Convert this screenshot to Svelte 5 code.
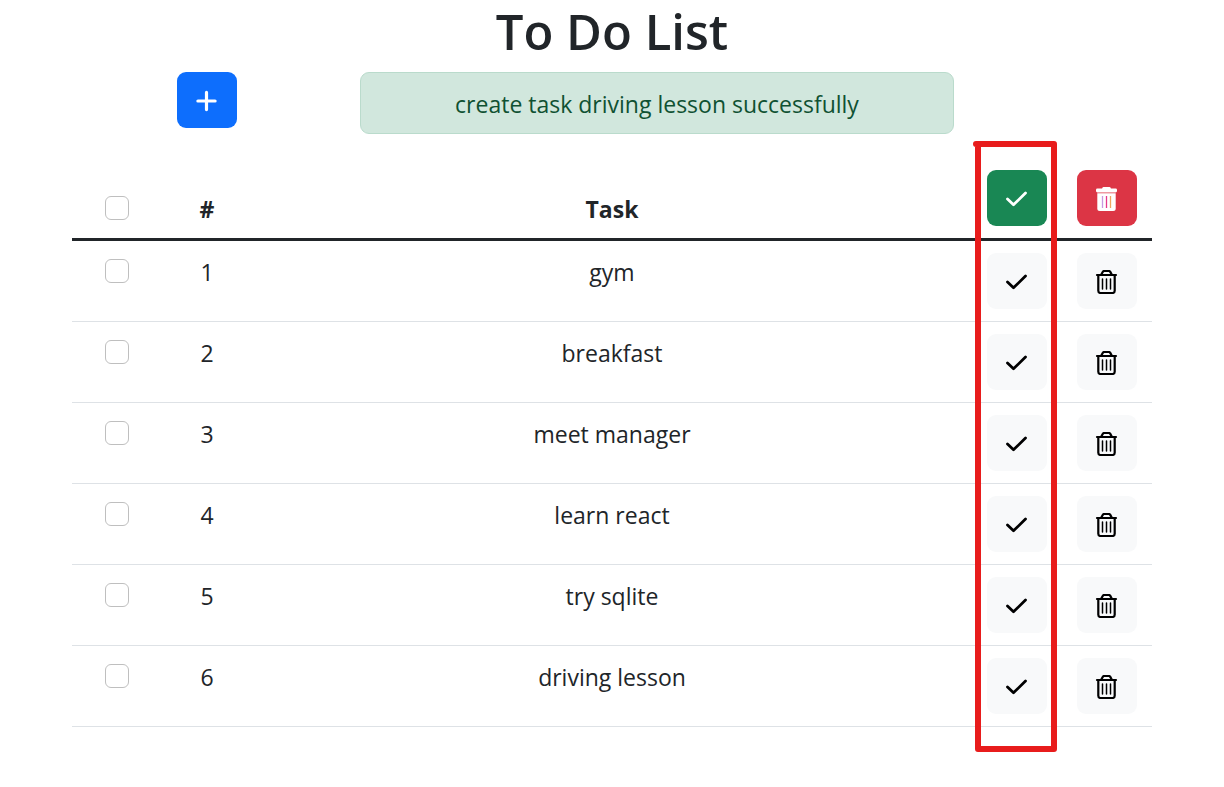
<script>
  const tasks = ['gym', 'breakfast', 'meet manager', 'learn react', 'try sqlite', 'driving lesson'];
</script>

{#snippet check()}
  <svg class="icon" viewBox="0 0 24 24" aria-hidden="true">
    <path d="M2.500 12 L8.500 17.800 L20.500 6" fill="none" stroke="currentColor" stroke-width="2.800" stroke-linecap="round" stroke-linejoin="round" />
  </svg>
{/snippet}

<main>
  <h1>To Do List</h1>

  <div class="top">
    <div class="add">
      <button class="btn primary" aria-label="Add task">
        <svg class="icon" viewBox="0 0 24 24" aria-hidden="true">
          <path d="M11.500 3.4v17.2M2.900 12h17.2" fill="none" stroke="currentColor" stroke-width="3.200" stroke-linecap="round" />
        </svg>
      </button>
    </div>
    <div class="message">
      <div class="alert" role="alert">create task driving lesson successfully</div>
    </div>
  </div>

  <div class="list">
    <table>
      <colgroup>
        <col class="narrow" /><col class="narrow" /><col /><col class="narrow" /><col class="narrow" />
      </colgroup>
      <thead>
        <tr>
          <th><input type="checkbox" aria-label="Select all tasks" /></th>
          <th>#</th>
          <th>Task</th>
          <th><button class="btn success" aria-label="Complete selected">{@render check()}</button></th>
          <th>
            <button class="btn danger" aria-label="Delete selected">
              <svg class="icon" viewBox="0 0 24 24" aria-hidden="true">
                <rect x="1" y="1.400" width="21" height="4" rx="1.4" fill="currentColor" />
                <path d="M7 3 Q7 0 8.500 0 H14.500 Q16 0 16 3Z" fill="currentColor" />
                <path d="M2.300 6.200 H20.700 V21.500 Q20.700 24 18.200 24 H4.800 Q2.300 24 2.300 21.500Z" fill="currentColor" />
                <path d="M7.500 9v12" stroke="#c79ae0" stroke-width="1.300" />
                <path d="M11.500 9v12" stroke="#e63a8c" stroke-width="1.300" />
                <path d="M15.500 9v12" stroke="#f0a860" stroke-width="1.300" />
              </svg>
            </button>
          </th>
        </tr>
      </thead>
      <tbody>
        {#each tasks as task, i}
          <tr>
            <td><input type="checkbox" aria-label={`Select ${task}`} /></td>
            <td>{i + 1}</td>
            <td>{task}</td>
            <td><button class="btn light" aria-label={`Complete ${task}`}>{@render check()}</button></td>
            <td>
              <button class="btn light" aria-label={`Delete ${task}`}>
                <svg class="icon" viewBox="0 0 24 24" aria-hidden="true">
                  <g fill="none" stroke="currentColor" stroke-linecap="round" stroke-linejoin="round">
                    <path d="M2 5h19M3.300 5.500v15.200q0 2.300 2.300 2.300h11.800q2.300 0 2.300-2.300V5.500" stroke-width="2.200" />
                    <path d="M6.300 4.500L7.700 1.900q0.500-0.900 1.500-0.900h4.600q1 0 1.500 0.900L16.700 4.500" stroke-width="2.200" />
                    <path d="M7.500 9v10M11.500 9v10M15.500 9v10" stroke-width="1.500" />
                  </g>
                </svg>
              </button>
            </td>
          </tr>
        {/each}
      </tbody>
    </table>
    <svg class="marker" viewBox="0 0 84 612" preserveAspectRatio="none" aria-hidden="true">
      <path d="M3 3H81M5 4V608M81 3V608M5 608H81" fill="none" stroke="#e81c1c" stroke-width="6" stroke-linecap="round" />
    </svg>
  </div>
</main>

<style>
  :global(body) {
    margin: 0;
    background: #fff;
  }
  main {
    max-width: 1080px;
    margin: 0 auto;
    padding: 0 24px 48px;
    color: #212529;
    font: 23px/36px 'Open Sans', 'Noto Sans', sans-serif;
    text-align: center;
  }
  h1 {
    margin: 0 0 10px;
    font-size: 49px;
    line-height: 62px;
    font-weight: 600;
  }
  .top {
    display: grid;
    grid-template-columns: repeat(12, 1fr);
    margin-bottom: 24px;
  }
  .add {
    grid-column: 2;
  }
  .message {
    grid-column: 4 / span 7;
    padding: 0 18px;
  }
  .alert {
    padding: 13px 24px 11px;
    border: 1px solid #badbcc;
    border-radius: 9px;
    background: #d1e7dd;
    color: #0f5132;
  }
  .list {
    position: relative;
  }
  table {
    width: 100%;
    table-layout: fixed;
    border-collapse: separate;
    border-spacing: 0;
  }
  .narrow {
    width: 8.3333%;
  }
  th,
  td {
    padding: 12px 0;
    text-align: center;
  }
  th {
    vertical-align: bottom;
    border-bottom: 3px solid #212529;
    line-height: 34px;
    font-weight: 700;
  }
  td {
    vertical-align: top;
    border-bottom: 1px solid #dee2e6;
    line-height: 38px;
  }
  input {
    appearance: none;
    display: block;
    width: 24px;
    height: 24px;
    margin: 6px auto;
    border: 1px solid #bfbfbf;
    border-radius: 6px;
    background: #fff;
  }
  .btn {
    display: inline-flex;
    align-items: center;
    justify-content: center;
    width: 60px;
    height: 56px;
    padding: 0;
    border: 0;
    border-radius: 9px;
    vertical-align: top;
  }
  .primary {
    background: #0d6efd;
    color: #fff;
  }
  .success {
    background: #198754;
    color: #fff;
  }
  .danger {
    background: #dc3545;
    color: #fff;
  }
  .light {
    background: #f8f9fa;
    color: #000;
  }
  .icon {
    width: 24px;
    height: 24px;
    margin-top: 2px;
  }
  .marker {
    position: absolute;
    top: -17px;
    right: 95px;
    width: 84px;
    height: calc(100% + 43px);
    overflow: visible;
    pointer-events: none;
  }
</style>
